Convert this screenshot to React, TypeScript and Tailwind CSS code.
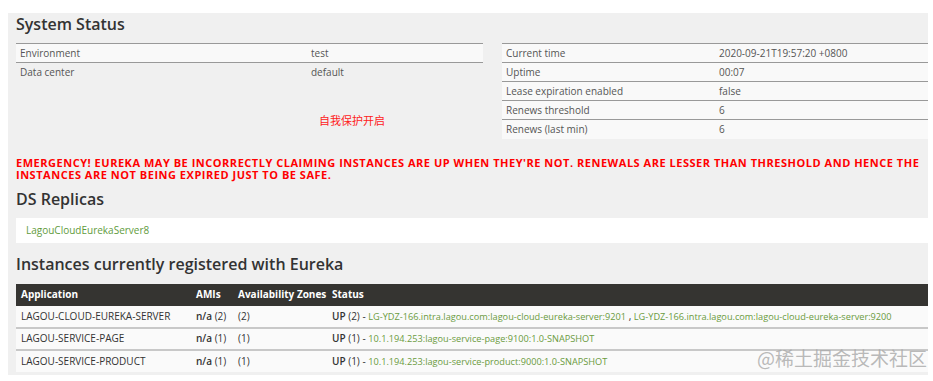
import React from 'react';

const body = "font-['Open_Sans','Liberation_Sans',sans-serif]";
const head = "font-['Open_Sans','Liberation_Sans',sans-serif] font-semibold text-[16px] leading-none text-[#333]";

const leftRows = [
  ['Environment', 'test'],
  ['Data center', 'default'],
];

const rightRows = [
  ['Current time', '2020-09-21T19:57:20 +0800'],
  ['Uptime', '00:07'],
  ['Lease expiration enabled', 'false'],
  ['Renews threshold', '6'],
  ['Renews (last min)', '6'],
];

type Instance = { app: string; ami: string; zones: string; count: string; links: string[] };

const instances: Instance[] = [
  {
    app: 'LAGOU-CLOUD-EUREKA-SERVER',
    ami: '(2)',
    zones: '(2)',
    count: '(2)',
    links: [
      'LG-YDZ-166.intra.lagou.com:lagou-cloud-eureka-server:9201',
      'LG-YDZ-166.intra.lagou.com:lagou-cloud-eureka-server:9200',
    ],
  },
  { app: 'LAGOU-SERVICE-PAGE', ami: '(1)', zones: '(1)', count: '(1)', links: ['10.1.194.253:lagou-service-page:9100:1.0-SNAPSHOT'] },
  { app: 'LAGOU-SERVICE-PRODUCT', ami: '(1)', zones: '(1)', count: '(1)', links: ['10.1.194.253:lagou-service-product:9000:1.0-SNAPSHOT'] },
];

export default function App() {
  return (
    <div className={`w-[933px] h-[381px] bg-white pt-[13px] pl-2 overflow-hidden ${body}`}>
      <div className="relative w-[920px] h-[362px] bg-[#f0f0f0] pl-2 pt-[3px]">
        <h1 className={head}>System Status</h1>

        <div className="flex mt-[11px]">
          <div className="w-[467px]">
            <table className="w-full border-collapse text-[10px] text-[#555]">
              <tbody>
                {leftRows.map(([k, v], i) => (
                  <tr key={k} className={i === 0 ? 'bg-[#f9f9f9] border-t border-b border-[#999]' : ''}>
                    <td className="w-[290px] h-[19px] px-[4px] py-0">{k}</td>
                    <td className="h-[19px] px-[5px] py-0">{v}</td>
                  </tr>
                ))}
              </tbody>
            </table>
            <div className="pl-[303px] mt-[30px] text-[11px] text-[#ff2020] font-['Noto_Sans_CJK_SC',sans-serif]">
              自我保护开启
            </div>
          </div>

          <div className="ml-[19px] flex-1">
            <table className="w-full border-collapse text-[10px] text-[#555]">
              <tbody>
                {rightRows.map(([k, v]) => (
                  <tr key={k} className="bg-[#f9f9f9] border-t border-[#999]">
                    <td className="w-1/2 h-[19px] px-[4px] py-0">{k}</td>
                    <td className="h-[19px] px-[4px] py-0">{v}</td>
                  </tr>
                ))}
              </tbody>
            </table>
          </div>
        </div>

        <p className="mt-[18px] text-[11px] leading-[12px] font-bold text-[#ff0000] uppercase tracking-[0.52px]">
          Emergency! Eureka may be incorrectly claiming instances are up when they're not. Renewals are lesser than threshold and hence the instances are not being expired just to be safe.
        </p>

        <h2 className={`${head} mt-[10px]`}>DS Replicas</h2>
        <div className="mt-[11px] h-[25px] bg-white flex items-center pl-[10px] text-[10px] text-[#5f9b3c]">
          LagouCloudEurekaServer8
        </div>

        <h2 className={`${head} mt-[13px]`}>Instances currently registered with Eureka</h2>
        <table className="mt-[12px] w-full border-collapse text-[10px] text-[#333]">
          <thead>
            <tr className="bg-[#353431] text-white text-left">
              <th className="w-[180px] h-[22px] pl-[5px] font-bold">Application</th>
              <th className="w-[42px] pl-0 font-bold">AMIs</th>
              <th className="w-[94px] pl-0 font-bold">Availability Zones</th>
              <th className="pl-0 font-bold">Status</th>
            </tr>
          </thead>
          <tbody>
            {instances.map((r, i) => (
              <tr key={r.app} className={`bg-[#fafafa] ${i > 0 ? 'border-t-2 border-[#c8c8c8]' : ''}`}>
                <td className="h-[22px] pl-[5px] py-0">{r.app}</td>
                <td className="py-0">
                  <b className="font-semibold">n/a</b> {r.ami}
                </td>
                <td className="py-0">{r.zones}</td>
                <td className="whitespace-nowrap py-0">
                  <b className="font-semibold">UP</b> {r.count} -{' '}
                  {r.links.map((l, j) => (
                    <React.Fragment key={l}>
                      {j > 0 && ' , '}
                      <a className="text-[#6a9a3e] text-[9.2px]">{l}</a>
                    </React.Fragment>
                  ))}
                </td>
              </tr>
            ))}
          </tbody>
        </table>

        <div className="absolute left-[749px] top-[335px] whitespace-nowrap text-[19px] leading-none text-[#a8a8a8]/80 font-['Noto_Sans_CJK_SC',sans-serif]">
          @稀土掘金技术社区
        </div>
      </div>
    </div>
  );
}
